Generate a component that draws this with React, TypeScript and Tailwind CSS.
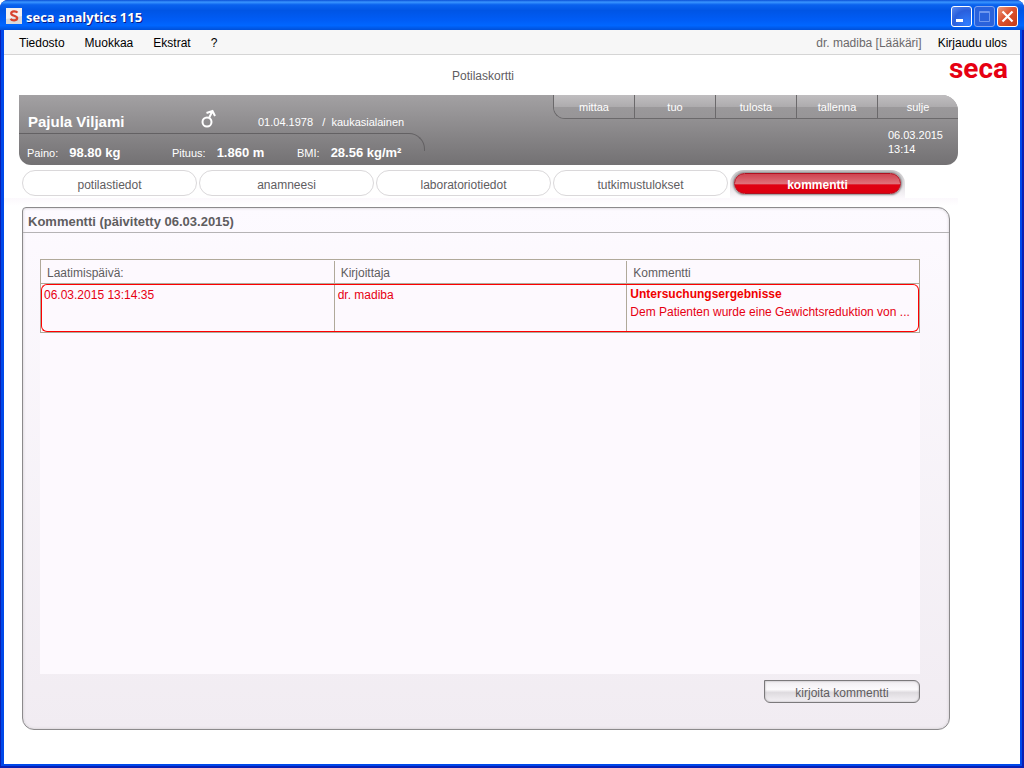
import type { ReactNode } from "react";

const MENU = ["Tiedosto", "Muokkaa", "Ekstrat", "?"];
const ACTIONS = ["mittaa", "tuo", "tulosta", "tallenna", "sulje"];
const TABS = [
  "potilastiedot",
  "anamneesi",
  "laboratoriotiedot",
  "tutkimustulokset",
  "kommentti",
];

const COMMENTS = [
  {
    date: "06.03.2015 13:14:35",
    author: "dr. madiba",
    title: "Untersuchungsergebnisse",
    text: "Dem Patienten wurde eine Gewichtsreduktion von ...",
  },
];

export default function App() {
  return (
    <div className="flex min-h-screen flex-col rounded-t-lg bg-[#0a1fb4] font-['Liberation_Sans',Arial,sans-serif] text-xs text-[#5f5d5f]">
      <TitleBar />
      <div className="mr-0.5 mb-0.5 ml-px flex flex-1 flex-col border-2 border-t-0 border-l-3 border-[#0048ea] bg-white">
        <MenuBar />
        <main className="flex flex-1 flex-col pb-[34px]">
          <div className="grid h-10 grid-cols-[1fr_auto_1fr] items-center pr-3 pl-[15px]">
            <span />
            <h1 className="pt-0.5 pr-[61px]">Potilaskortti</h1>
            <Logo />
          </div>
          <PatientHeader />
          <Tabs />
          <CommentPanel />
        </main>
      </div>
    </div>
  );
}

function TitleBar() {
  return (
    <header className="flex h-[30px] items-center rounded-t-lg bg-[linear-gradient(#0a4fd6_0%,#3a95ff_7%,#0a62ee_16%,#0055e5_35%,#005cf5_65%,#0066ff_85%,#0050d8_100%)] px-1.5 pt-0.5">
      <svg width="16" height="16" viewBox="0 0 16 16" aria-hidden="true">
        <rect width="16" height="16" fill="#f3efef" />
        <path d="M16 8v8H0v-5z" fill="#dcdada" />
        <path
          d="M11.4 4.6C10.4 3 5.2 2.8 5.2 5.5c0 2.8 6 1.7 6 4.6 0 2.9-5.3 2.7-6.6.8"
          fill="none"
          stroke="#d8432f"
          strokeWidth="2.2"
        />
      </svg>
      <span className="flex-1 pt-0.5 pl-1 font-['Open_Sans','Noto_Sans',sans-serif] text-[13px] leading-4 font-bold text-white [text-shadow:1px_1px_0_#0a1883]">
        seca analytics 115
      </span>
      <div className="flex gap-0.5">
        <CaptionButton
          label="Minimize"
          className="border-white bg-[radial-gradient(circle_at_80%_90%,#2f7dff,#2a5fdc_60%,#5c8bef)]"
        >
          <rect x="4" y="12" width="7" height="3" fill="#fff" />
        </CaptionButton>
        <CaptionButton label="Maximize" className="border-[#7fa3f0] bg-[#2a62dc]">
          <path d="M4.5 4.5h10v10h-10zM4.5 5.5h10" fill="none" stroke="#6f97ee" />
        </CaptionButton>
        <CaptionButton
          label="Close"
          className="border-white bg-[linear-gradient(135deg,#ec9a7c,#dc5230_45%,#c33a14)]"
        >
          <path d="M4.5 4.5l10 10M14.5 4.5l-10 10" stroke="#fff" strokeWidth="2.2" />
        </CaptionButton>
      </div>
    </header>
  );
}

function CaptionButton({
  label,
  className,
  children,
}: {
  label: string;
  className: string;
  children: ReactNode;
}) {
  return (
    <button aria-label={label} className={`size-[21px] rounded-[3px] border ${className}`}>
      <svg width="19" height="19" viewBox="0 0 19 19">
        {children}
      </svg>
    </button>
  );
}

function MenuBar() {
  return (
    <nav className="flex h-[25px] items-center gap-5 border-b border-[#d5d5d5] bg-[#f7f7f7] pt-0.5 pr-[13px] pl-[15px] text-black">
      {MENU.map((item) => (
        <button key={item}>{item}</button>
      ))}
      <span className="-mr-1 ml-auto text-[#6b696b]">dr. madiba [Lääkäri]</span>
      <button>Kirjaudu ulos</button>
    </nav>
  );
}

function Logo() {
  return (
    <span className="self-start justify-self-end font-[Roboto,'Liberation_Sans',sans-serif] text-[28px] leading-7 font-bold text-[#e60012]">
      seca
    </span>
  );
}

function PatientHeader() {
  return (
    <section className="mr-[62px] ml-[15px] flex h-[70px] justify-between overflow-hidden rounded-tr-2xl rounded-b-xl bg-linear-to-b from-[#a3a1a3] to-[#737173] text-[11px] text-white">
      <div className="w-[406px]">
        <div className="flex h-[38px] items-end pl-[9px]">
          <h2 className="w-[173px] text-[15px] leading-[22px] font-bold">Pajula Viljami</h2>
          <svg width="16" height="20" viewBox="0 0 16 20" className="mb-1" role="img" aria-label="mies">
            <g fill="none" stroke="#fff" strokeWidth="2">
              <circle cx="6" cy="13" r="4.5" />
              <path d="M8 9L11 3M5.5 4L11.5 2L14 7" />
            </g>
          </svg>
          <span className="pl-[41px] leading-[22px] whitespace-pre">01.04.1978   /  kaukasialainen</span>
        </div>
        <dl className="relative flex h-8 items-center pt-2 pl-2">
          {/* divider that bends down and stops halfway */}
          <span className="absolute inset-x-0 top-0 h-[18px] rounded-tr-[16px] border-t border-r border-[#636163]" />
          <Measure label="Paino:" value="98.80 kg" className="w-[145px]" />
          <Measure label="Pituus:" value="1.860 m" className="w-[125px]" />
          <Measure label="BMI:" value="28.56 kg/m²" className="" />
        </dl>
      </div>
      <div className="flex flex-col items-end">
        <div className="flex w-[405px] overflow-hidden rounded-bl-xl border-b border-l border-[#6b696b]">
          {ACTIONS.map((action) => (
            <button
              key={action}
              className="h-[23px] flex-1 border-r border-[#6b696b] bg-[linear-gradient(#c0bec0,#aeacae_50%,#9b999b_50%,#979597)] pt-0.5 last:border-r-0"
            >
              {action}
            </button>
          ))}
        </div>
        <div className="pt-[9px] pr-[15px] leading-[14px]">
          <div>06.03.2015</div>
          <div>13:14</div>
        </div>
      </div>
    </section>
  );
}

function Measure({ label, value, className }: { label: string; value: string; className: string }) {
  return (
    <div className={`flex items-baseline gap-[11px] ${className}`}>
      <dt>{label}</dt>
      <dd className="text-[13px] font-bold whitespace-nowrap">{value}</dd>
    </div>
  );
}

function Tabs() {
  return (
    <nav className="mr-[62px] ml-[18px] flex items-start gap-0.5 pt-[5px]">
      {TABS.map((tab) =>
        tab === "kommentti" ? (
          <div
            key={tab}
            className="rounded-t-[14px] bg-linear-to-b from-[#c9c7c9] to-[#fbf8fc] px-1 pt-[3px] pb-1"
          >
            <button className="h-[21px] w-[167px] rounded-full border border-[#b01020] bg-[linear-gradient(#cf4450,#e0707a_50%,#e00012_58%,#dc0010)] pt-0.5 leading-4 font-bold text-white shadow-[0_0_2px_1px_#8a888a]">
              {tab}
            </button>
          </div>
        ) : (
          <button
            key={tab}
            className="h-[26px] w-[175px] rounded-full border border-[#dad8da] bg-white pt-1"
          >
            {tab}
          </button>
        ),
      )}
    </nav>
  );
}

function CommentPanel() {
  return (
    <div className="mr-[62px] flex flex-1 flex-col bg-[linear-gradient(#fbf8fc,#fff_8px)] pt-[9px] pr-2 pl-[18px]">
      <section className="flex flex-1 flex-col rounded-xl rounded-tl-sm border border-[#8c8a8c] bg-linear-to-b from-[#fdfaff] to-[#f1ecf2] shadow-[inset_0_0_3px_#c8c6c8]">
        <h2 className="h-[25px] border-b border-[#b5b3b5] pl-[5px] text-[13px] leading-7 font-bold">
          Kommentti (päivitetty 06.03.2015)
        </h2>
        <div className="mt-[26px] mr-[29px] ml-[17px] flex-1 bg-[#fdf9fe]">
          <table className="w-full table-fixed border-separate border-spacing-0 border border-[#b0a99a] text-left">
            <thead>
              <tr>
                <HeaderCell>Laatimispäivä:</HeaderCell>
                <HeaderCell>Kirjoittaja</HeaderCell>
                <HeaderCell>Kommentti</HeaderCell>
              </tr>
            </thead>
            <tbody>
              {COMMENTS.map((c) => (
                <tr key={c.date} className="align-top text-[#e60012]">
                  <td className="rounded-l-md border-y border-l border-[#ff0000] px-0.5 py-0.5">
                    {c.date}
                  </td>
                  <td className="border-y border-[#ff0000] p-0">
                    <div className="h-[46px] border-l border-[#b0a99a] px-[3px] py-0.5">{c.author}</div>
                  </td>
                  <td className="rounded-r-md border-y border-r border-[#ff0000] p-0">
                    <div className="h-[46px] truncate border-l border-[#b0a99a] pl-[3px] leading-[18px]">
                      <strong className="block text-[#f00000]">{c.title}</strong>
                      {c.text}
                    </div>
                  </td>
                </tr>
              ))}
            </tbody>
          </table>
        </div>
        <button className="mt-1.5 mr-[29px] mb-[26px] h-[23px] w-[156px] self-end rounded-md rounded-tl-none border border-[#7b797b] bg-[linear-gradient(#f0edf1,#fcfafc_40%,#dedbdf_55%,#f4f1f5)] pt-0.5 shadow-[inset_0_0_2px_#a09ea0]">
          kirjoita kommentti
        </button>
      </section>
    </div>
  );
}

function HeaderCell({ children }: { children: ReactNode }) {
  return (
    <th className="group border-b border-[#b0a99a] p-0 font-normal">
      <div className="mt-px h-[22px] border-l border-[#b0a99a] pl-1.5 leading-6 group-first:border-l-0">
        {children}
      </div>
    </th>
  );
}
